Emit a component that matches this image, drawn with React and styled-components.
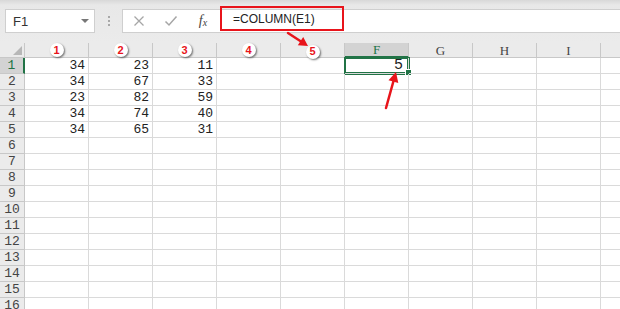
import React from 'react'
import styled, { createGlobalStyle } from 'styled-components'

const GlobalStyle = createGlobalStyle`
  body { margin: 0; background: #fff; font-family: "Liberation Sans", Arial, sans-serif; }
`

const GREEN = '#217346'
const RED = '#e8141b'

const Page = styled.div`
  position: relative;
  width: 620px;
  height: 309px;
  overflow: hidden;
  background: #fff;
`

const Toolbar = styled.div`
  height: 43px;
  box-sizing: border-box;
  padding: 9px 0 0 5px;
  display: flex;
  align-items: flex-start;
  background: linear-gradient(#d8d8d8, #e8e8e8 5px, #ebebeb);
`

const NameBox = styled.div`
  width: 90px;
  height: 24px;
  box-sizing: border-box;
  border: 1px solid #cfcfcf;
  background: #fff;
  display: flex;
  align-items: center;
  justify-content: space-between;
  padding: 0 5px 0 7px;
  font-size: 13px;
  color: #333;
`

const Caret = styled.span`
  width: 0;
  height: 0;
  border-left: 4px solid transparent;
  border-right: 4px solid transparent;
  border-top: 4px solid #777;
`

const Grip = styled.div`
  width: 27px;
  height: 24px;
  display: flex;
  flex-direction: column;
  align-items: center;
  justify-content: center;
  gap: 2px;
  span {
    width: 2px;
    height: 2px;
    background: #a8a8a8;
  }
`

const FormulaBox = styled.div`
  flex: 1;
  height: 24px;
  box-sizing: border-box;
  border: 1px solid #cfcfcf;
  border-right: none;
  background: #fff;
  display: flex;
  align-items: flex-start;
`

const IconButton = styled.div`
  width: 32px;
  height: 22px;
  display: flex;
  align-items: center;
  justify-content: center;
  color: #a6a6a6;
`

const Fx = styled.span`
  font-family: "Liberation Serif", serif;
  font-style: italic;
  font-size: 14px;
  color: #444;
  sub {
    font-size: 10px;
    vertical-align: -1px;
  }
`

const Highlight = styled.div`
  margin: -4px 0 0 1px;
  width: 124px;
  height: 25px;
  box-sizing: border-box;
  border: 2px solid ${RED};
  display: flex;
  align-items: center;
  padding-left: 11px;
  font-size: 12px;
  color: #222;
`

const Grid = styled.div`
  display: grid;
  grid-template-columns: 25px repeat(10, 64px);
  grid-template-rows: 15px;
  grid-auto-rows: 16px;
  font-family: "Liberation Mono", "Courier New", monospace;
  font-size: 13px;
`

const Corner = styled.div`
  box-sizing: border-box;
  background: #ebebeb;
  border-right: 1px solid #c8c8c8;
  border-bottom: 1px solid #c8c8c8;
  display: flex;
  align-items: flex-end;
  justify-content: flex-end;
  padding: 0 2px 2px 0;
  &::after {
    content: '';
    border-left: 9px solid transparent;
    border-bottom: 9px solid #b7b7b7;
  }
`

const ColHead = styled.div`
  box-sizing: border-box;
  background: ${p => (p.active ? '#d3d3d3' : '#ebebeb')};
  color: ${p => (p.active ? GREEN : '#444')};
  border-right: 1px solid #c8c8c8;
  border-bottom: ${p => (p.active ? `2px solid ${GREEN}` : '1px solid #c8c8c8')};
  display: flex;
  align-items: center;
  justify-content: center;
  line-height: 1;
  font-family: "Liberation Serif", "Times New Roman", serif;
  font-size: 13px;
`

const Badge = styled.span`
  width: 14px;
  height: 14px;
  border-radius: 50%;
  background: #fff;
  box-shadow: 1px 1px 2px rgba(0, 0, 0, 0.55);
  display: flex;
  align-items: center;
  justify-content: center;
  font-family: "Liberation Sans", Arial, sans-serif;
  font-weight: bold;
  font-size: 11px;
  color: ${RED};
  margin-top: ${p => p.drop || 0}px;
`

const RowHead = styled.div`
  box-sizing: border-box;
  background: ${p => (p.active ? '#d3d3d3' : '#ebebeb')};
  color: ${p => (p.active ? GREEN : '#444')};
  border-right: ${p => (p.active ? `2px solid ${GREEN}` : '1px solid #c8c8c8')};
  border-bottom: 1px solid #c8c8c8;
  display: flex;
  align-items: center;
  justify-content: center;
`

const Cell = styled.div`
  position: relative;
  box-sizing: border-box;
  border-right: 1px solid #dadada;
  border-bottom: 1px solid #dadada;
  display: flex;
  align-items: center;
  justify-content: flex-end;
  padding-right: 3px;
  color: #222;
  ${p =>
    p.selected &&
    `
    box-shadow: 0 0 0 1px ${GREEN}, inset 0 0 0 1px ${GREEN};
    font-size: 15px;
    padding-right: 5px;
    &::after {
      content: '';
      position: absolute;
      right: -4px;
      bottom: -3px;
      width: 5px;
      height: 5px;
      background: ${GREEN};
      border: 1px solid #fff;
    }
  `}
`

const Arrows = styled.svg`
  position: absolute;
  left: 0;
  top: 0;
  pointer-events: none;
`

const columns = ['A', 'B', 'C', 'D', 'E', 'F', 'G', 'H', 'I', 'J']
const badges = { A: '1', B: '2', C: '3', D: '4', E: '5' }
const data = [
  [34, 23, 11],
  [34, 67, 33],
  [23, 82, 59],
  [34, 74, 40],
  [34, 65, 31],
]

const App = () => {
  const rows = Array.from({ length: 16 }, (_, i) => i + 1)
  return (
    <Page>
      <GlobalStyle />
      <Toolbar>
        <NameBox>
          F1
          <Caret />
        </NameBox>
        <Grip>
          <span />
          <span />
          <span />
        </Grip>
        <FormulaBox>
          <IconButton>
            <svg width="12" height="12" viewBox="0 0 12 12">
              <path d="M1.5 1.5 L10.5 10.5 M10.5 1.5 L1.5 10.5" stroke="currentColor" strokeWidth="1.3" />
            </svg>
          </IconButton>
          <IconButton>
            <svg width="14" height="12" viewBox="0 0 14 12">
              <path d="M1.5 6.5 L5 10 L12.5 1.5" stroke="currentColor" strokeWidth="1.5" fill="none" />
            </svg>
          </IconButton>
          <IconButton>
            <Fx>
              f<sub>x</sub>
            </Fx>
          </IconButton>
          <Highlight>=COLUMN(E1)</Highlight>
        </FormulaBox>
      </Toolbar>
      <Grid>
        <Corner />
        {columns.map(c => (
          <ColHead key={c} active={c === 'F'}>
            {badges[c] ? <Badge drop={c === 'E' ? 3 : 0}>{badges[c]}</Badge> : c === 'J' ? '' : c}
          </ColHead>
        ))}
        {rows.map(r => (
          <React.Fragment key={r}>
            <RowHead active={r === 1}>{r}</RowHead>
            {columns.map((c, ci) => {
              const selected = r === 1 && c === 'F'
              const value = selected ? 5 : data[r - 1] && ci < 3 ? data[r - 1][ci] : ''
              return (
                <Cell key={c} selected={selected}>
                  {value}
                </Cell>
              )
            })}
          </React.Fragment>
        ))}
      </Grid>
      <Arrows width="620" height="309">
        <line x1="288" y1="33" x2="301" y2="41.5" stroke={RED} strokeWidth="2.5" strokeLinecap="round" />
        <polygon points="308,46 297.8,45.3 303.2,36.9" fill={RED} />
        <line x1="386" y1="108" x2="393.5" y2="81" stroke={RED} strokeWidth="2.5" strokeLinecap="round" />
        <polygon points="396,72 398.3,83 388.5,80.3" fill={RED} />
      </Arrows>
    </Page>
  )
}

export default App
